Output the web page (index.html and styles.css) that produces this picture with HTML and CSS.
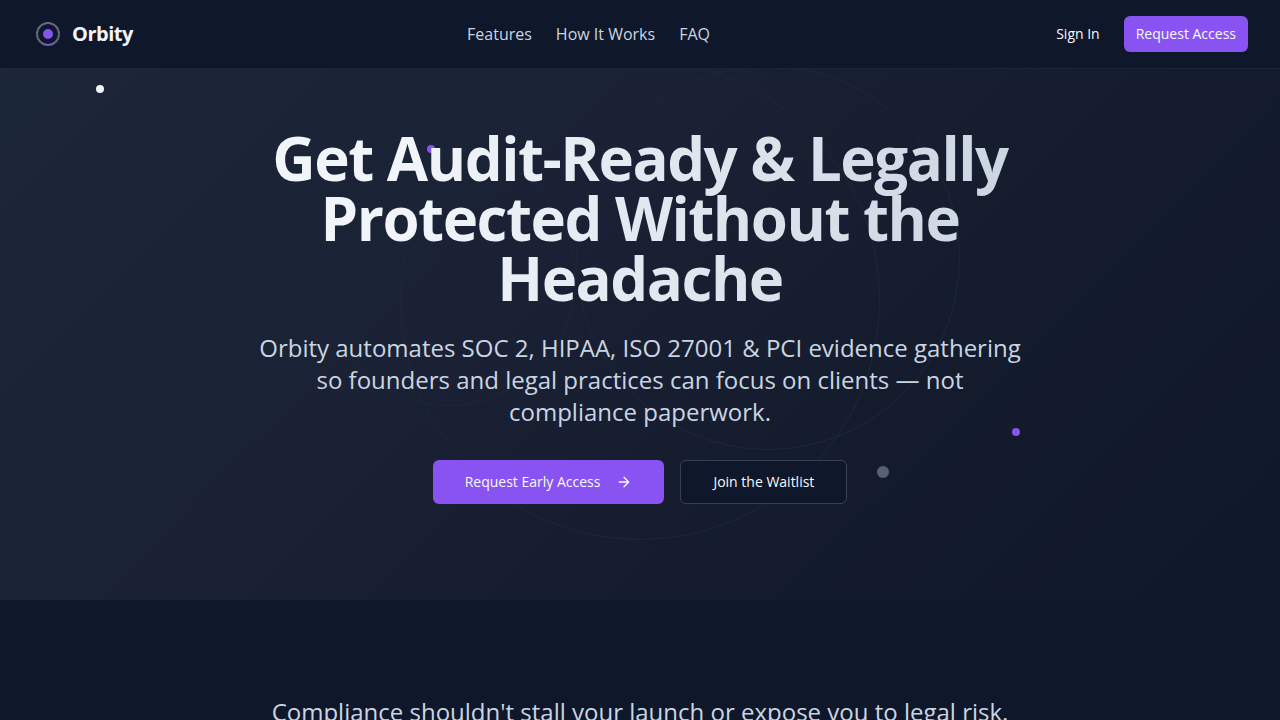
FILE: index.html
```html
<!DOCTYPE html>
<html lang="en">
<head>
<meta charset="utf-8">
<meta name="viewport" content="width=device-width, initial-scale=1">
<title>Orbity</title>
<link rel="stylesheet" href="styles.css">
</head>
<body>
<header class="header">
  <a class="brand" href="#top">
    <svg class="brand-icon" viewBox="0 0 32 32" aria-hidden="true">
      <circle cx="16" cy="16" r="11" fill="none" stroke="#5f6780" stroke-width="2"/>
      <path d="M11 25.8a11 11 0 0 0 10 0M11 6.2a11 11 0 0 1 10 0" fill="none" stroke="#7c55d8" stroke-width="1"/>
      <circle cx="16" cy="16" r="5" fill="#8853f0"/>
    </svg>
    <span>Orbity</span>
  </a>
  <nav class="nav">
    <a href="#features">Features</a>
    <a href="#how">How It Works</a>
    <a href="#faq">FAQ</a>
  </nav>
  <div class="actions">
    <button class="btn btn-ghost" type="button">Sign In</button>
    <button class="btn btn-primary" type="button">Request Access</button>
  </div>
</header>
<main id="top">
  <section class="hero">
    <div class="orbits" aria-hidden="true">
      <span class="ring ring-center"></span>
      <span class="ring ring-left"></span>
      <span class="ring ring-right"></span>
      <span class="dot dot-white"></span>
      <span class="dot dot-top"></span>
      <span class="dot dot-right"></span>
      <span class="dot dot-gray"></span>
    </div>
    <div class="hero-content">
      <h1>Get Audit-Ready &amp; Legally Protected Without the Headache</h1>
      <p>Orbity automates SOC 2, HIPAA, ISO 27001 &amp; PCI evidence gathering so founders and legal practices can focus on clients — not compliance paperwork.</p>
      <div class="cta">
        <button class="btn btn-primary btn-large" type="button">Request Early Access
          <svg class="arrow" viewBox="0 0 24 24" aria-hidden="true"><path d="M5 12h14M12 5l7 7-7 7"/></svg>
        </button>
        <button class="btn btn-outline btn-large" type="button">Join the Waitlist</button>
      </div>
    </div>
  </section>
  <section class="problem">
    <p>Compliance shouldn't stall your launch or expose you to legal risk.</p>
  </section>
</main>
</body>
</html>
```

FILE: styles.css
```css
* {
  box-sizing: border-box;
}

body {
  margin: 0;
  background: #0f172a;
  color: #f1f5f9;
  font-family: "Open Sans", "Noto Sans", sans-serif;
  font-size: 16px;
  line-height: 24px;
  overflow-x: hidden;
}

h1,
p {
  margin: 0;
}

a {
  color: inherit;
  text-decoration: none;
}

.header {
  position: fixed;
  top: 0;
  left: 0;
  right: 0;
  z-index: 10;
  display: flex;
  align-items: center;
  justify-content: space-between;
  padding: 16px 32px;
  background: #0f172a;
  border-bottom: 1px solid #1b2537;
}

.brand {
  display: flex;
  align-items: center;
  gap: 8px;
  font-size: 20px;
  font-weight: 700;
  line-height: 28px;
  letter-spacing: -0.025em;
}

.brand-icon {
  width: 32px;
  height: 32px;
}

.nav {
  display: flex;
  gap: 24px;
  color: #cbd5e1;
}

.actions {
  display: flex;
  gap: 12px;
}

.btn {
  display: inline-flex;
  align-items: center;
  justify-content: center;
  height: 36px;
  padding: 0 12px;
  border: 0;
  border-radius: 6px;
  background: transparent;
  color: #f8fafc;
  font: inherit;
  font-size: 14px;
  line-height: 20px;
  cursor: pointer;
}

.btn-primary {
  background: #8853f0;
}

.btn-large {
  height: 44px;
  padding: 0 32px;
}

.btn-outline {
  background: #0f172a;
  border: 1px solid #374151;
}

.hero {
  position: relative;
  overflow: hidden;
  padding: 128px 32px 96px;
  background: linear-gradient(135deg, #1c2738, #1b2437 22%, #1a2134 42%, #141c2e 65%, #0f172a);
}

.orbits {
  position: absolute;
  inset: 0;
}

.ring,
.dot {
  position: absolute;
  border-radius: 50%;
}

.ring {
  border: 1px solid #1c283a;
}

.ring-center {
  width: 480px;
  height: 480px;
  top: 50%;
  left: 50%;
  margin: -240px 0 0 -240px;
}

.ring-left {
  width: 256px;
  height: 256px;
  top: 25%;
  left: 25%;
}

.ring-right {
  width: 384px;
  height: 384px;
  right: 25%;
  bottom: 25%;
}

.dot {
  width: 8px;
  height: 8px;
  background: #8853f0;
}

.dot-white {
  top: 85px;
  left: 96px;
  background: #f1f5f9;
}

.dot-top {
  top: 145px;
  left: 427px;
}

.dot-right {
  top: 428px;
  left: 1012px;
}

.dot-gray {
  width: 12px;
  height: 12px;
  top: 466px;
  left: 877px;
  background: #596174;
}

.hero-content {
  position: relative;
  display: flex;
  flex-direction: column;
  align-items: center;
  max-width: 768px;
  margin: 0 auto;
  text-align: center;
}

h1 {
  font-size: 60px;
  font-weight: 700;
  line-height: 60px;
  letter-spacing: -0.025em;
  background: linear-gradient(to right, #f1f5f9 20%, #cbd5e1);
  background-clip: text;
  -webkit-background-clip: text;
  color: transparent;
}

.hero-content p,
.problem p {
  color: #cbd5e1;
  font-size: 24px;
  line-height: 32px;
}

.hero-content p {
  margin-top: 24px;
}

.cta {
  display: flex;
  flex-wrap: wrap;
  justify-content: center;
  gap: 16px;
  margin-top: 32px;
}

.arrow {
  width: 16px;
  height: 16px;
  margin-left: 16px;
  fill: none;
  stroke: currentColor;
  stroke-width: 2;
  stroke-linecap: round;
  stroke-linejoin: round;
}

.problem {
  padding: 96px 32px;
  text-align: center;
}
```
